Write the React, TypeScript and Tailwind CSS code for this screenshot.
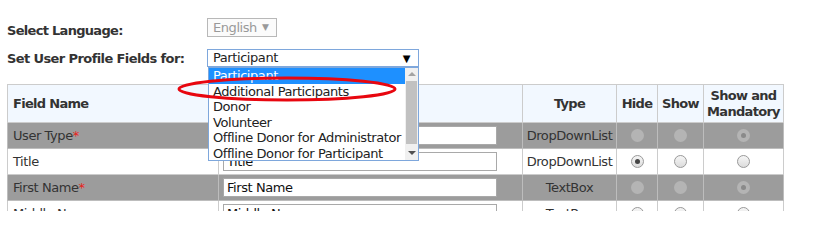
import React from 'react';

type Row = { name: string; required?: boolean; value: string; type: string; gray: boolean; checked?: 'hide' | 'show' | 'mandatory' };

const rows: Row[] = [
	{ name: 'User Type', required: true, value: '', type: 'DropDownList', gray: true, checked: 'mandatory' },
	{ name: 'Title', value: 'Title', type: 'DropDownList', gray: false, checked: 'hide' },
	{ name: 'First Name', required: true, value: 'First Name', type: 'TextBox', gray: true, checked: 'mandatory' },
	{ name: 'Middle Name', value: 'Middle Name', type: 'TextBox', gray: false, checked: 'hide' },
];

const options = ['Participant', 'Additional Participants', 'Donor', 'Volunteer', 'Offline Donor for Administrator', 'Offline Donor for Participant'];

function Radio({ checked, disabled }: { checked?: boolean; disabled?: boolean }) {
	if (disabled) {
		return (
			<span className="inline-flex h-[13px] w-[13px] items-center justify-center rounded-full bg-[#b4b4b4]">
				{checked && <span className="h-[5px] w-[5px] rounded-full bg-[#8a8a8a]" />}
			</span>
		);
	}
	return (
		<span className="inline-flex h-[13px] w-[13px] items-center justify-center rounded-full border border-[#9a9a9a] bg-gradient-to-b from-[#f6f6f6] to-[#dcdcdc]">
			{checked && <span className="h-[5px] w-[5px] rounded-full bg-[#444]" />}
		</span>
	);
}

export default function App() {
	const cell = (gray: boolean) => (gray ? 'border border-[#bdbdbd]' : 'border border-[#ccc]');
	return (
		<div className="relative h-[211px] w-[814px] overflow-hidden bg-white font-['DejaVu_Sans','Liberation_Sans',sans-serif] text-[13px] tracking-[-0.43px] text-[#333]">
			<div className="pl-[7px] pt-[18px]">
				<div className="flex h-[19px] items-end">
					<span className="w-[200px] translate-y-[1px] font-bold leading-[15px] tracking-[-0.7px]">Select Language:</span>
					<div className="flex h-[19px] w-[70px] items-center border border-[#b8b8b8] bg-[#fbfbfb] pl-[5px] text-[#999]">
						English <span className="ml-[5px] text-[9px]">▼</span>
					</div>
				</div>
				<div className="mt-[12px] flex h-[18px] items-center">
					<span className="w-[200px] translate-y-[1px] font-bold tracking-[-0.6px]">Set User Profile Fields for:</span>
					<div className="flex h-[18px] w-[212px] items-center justify-between border border-[#7ea7dc] bg-white pl-[5px] pr-[8px] text-[#222]">
						<span>Participant</span>
						<span className="text-[10px] text-black">▼</span>
					</div>
				</div>
			</div>

			<table className="ml-[7px] mt-[17px] border-collapse text-[13px]">
				<thead>
					<tr className="h-[38px] bg-[#f2f8ff] tracking-[-0.7px]">
						<th className="w-[211px] border border-[#ccc] pl-[5px] text-left font-bold">Field Name</th>
						<th className="w-[304px] border border-[#ccc]"></th>
						<th className="w-[94px] border border-[#ccc] font-bold">Type</th>
						<th className="w-[41px] border border-[#ccc] font-bold">Hide</th>
						<th className="w-[46px] border border-[#ccc] font-bold">Show</th>
						<th className="w-[80px] border border-[#ccc] font-bold leading-[16px]">
							Show and
							<br />
							Mandatory
						</th>
					</tr>
				</thead>
				<tbody>
					{rows.map((r) => (
						<tr key={r.name} className={r.gray ? 'h-[26px] bg-[#9c9c9c] text-[#333]' : 'h-[26px] bg-white text-[#333]'}>
							<td className={`${cell(r.gray)} whitespace-nowrap pl-[5px]`}>
								{r.name}
								{r.required && <span className="text-[#e8231d]">*</span>}
							</td>
							<td className={`${cell(r.gray)} pl-[4px]`}>
								<div className="flex h-[19px] w-[274px] items-center border border-[#a9a9a9] bg-white pl-[3px] text-[#111]">{r.value}</div>
							</td>
							<td className={`${cell(r.gray)} text-center`}>{r.type}</td>
							<td className={cell(r.gray)}>
								<div className="flex justify-center">
									<Radio disabled={r.gray} checked={r.checked === 'hide' && !r.gray} />
								</div>
							</td>
							<td className={cell(r.gray)}>
								<div className="flex justify-center">
									<Radio disabled={r.gray} />
								</div>
							</td>
							<td className={cell(r.gray)}>
								<div className="flex justify-center">
									<Radio disabled={r.gray} checked={r.gray} />
								</div>
							</td>
						</tr>
					))}
				</tbody>
			</table>

			{/* open dropdown list */}
			<div className="absolute left-[208px] top-[67px] flex h-[94px] w-[211px] border border-[#7ea7dc] bg-white">
				<div className="flex-1 overflow-hidden">
					{options.map((o, i) => (
						<div key={o} className={i === 0 ? 'h-[15.5px] whitespace-nowrap bg-[#1e90ff] pl-[4px] leading-[15.5px] text-white' : 'h-[15.5px] whitespace-nowrap pl-[4px] leading-[15.5px] text-[#222]'}>
							{o}
						</div>
					))}
				</div>
				<div className="flex w-[13px] flex-col items-center bg-[#f0f0f0]">
					<span className="mt-[4px] h-0 w-0 border-x-[4px] border-b-[4px] border-x-transparent border-b-[#a3a3a3]" />
					<div className="mt-[5px] h-[63px] w-[11px] bg-[#c1c1c1]" />
					<span className="mb-[5px] mt-auto h-0 w-0 border-x-[4px] border-t-[4px] border-x-transparent border-t-[#505050]" />
				</div>
			</div>

			{/* annotation */}
			<svg className="pointer-events-none absolute left-0 top-0" width="814" height="211">
				<ellipse cx="287" cy="89" rx="108" ry="11" fill="none" stroke="#e8060f" strokeWidth="3" />
			</svg>
		</div>
	);
}
